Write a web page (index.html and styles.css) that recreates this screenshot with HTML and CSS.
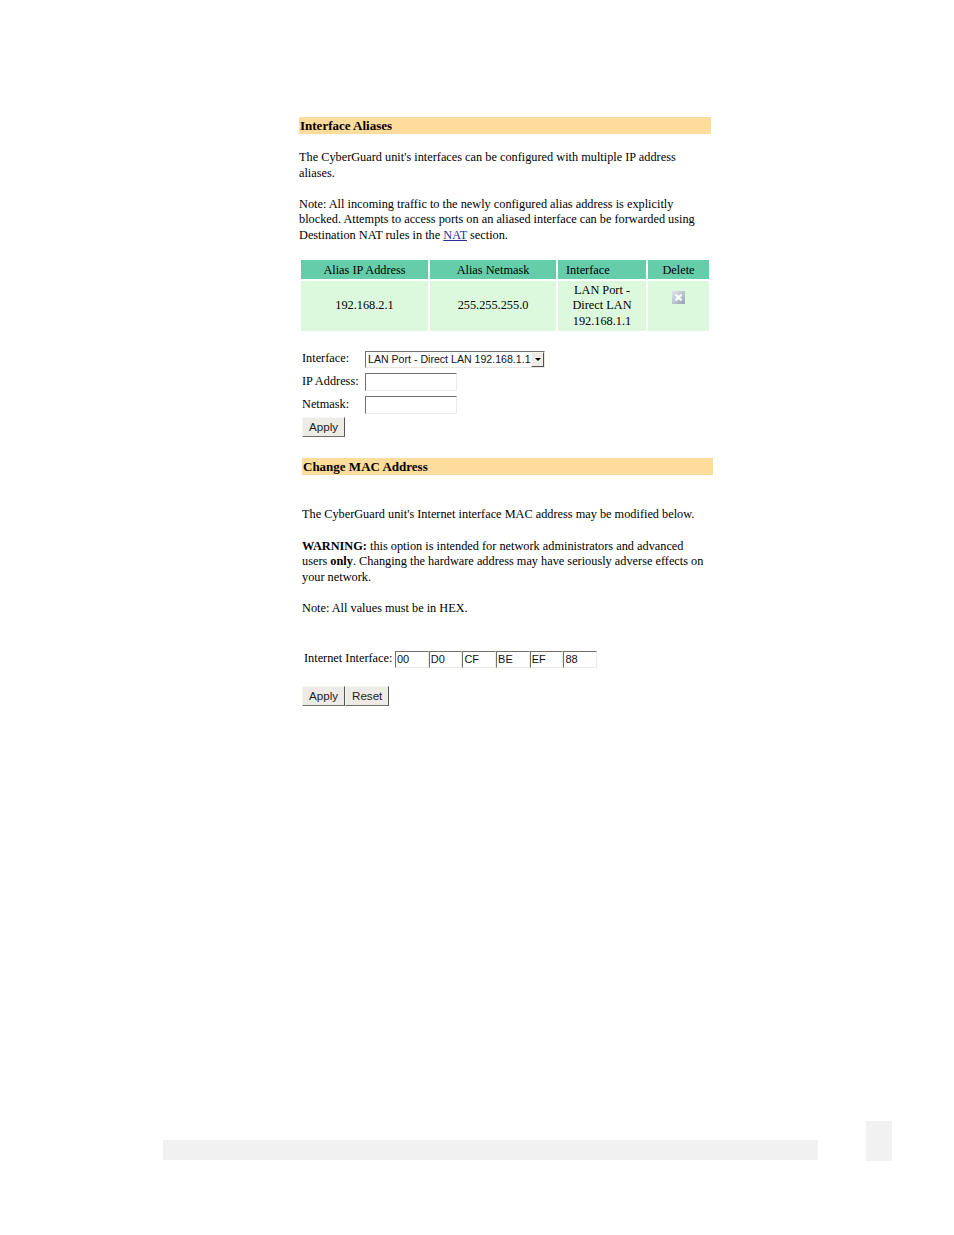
FILE: index.html
```html
<!DOCTYPE html>
<html lang="en">
<head>
  <meta charset="UTF-8">
  <title>Interface Aliases</title>
  <link rel="stylesheet" href="styles.css">
</head>
<body>
  <div class="page">
    <section class="aliases">
      <h3 class="banner">Interface Aliases</h3>
      <p>The CyberGuard unit's interfaces can be configured with multiple IP address<br>aliases.</p>
      <p>Note: All incoming traffic to the newly configured alias address is explicitly<br>blocked. Attempts to access ports on an aliased interface can be forwarded using<br>Destination NAT rules in the <a href="#">NAT</a> section.</p>

      <table class="alias-table">
        <colgroup>
          <col class="col-ip">
          <col class="col-mask">
          <col class="col-if">
          <col class="col-del">
        </colgroup>
        <tr>
          <th>Alias IP Address</th>
          <th>Alias Netmask</th>
          <th class="th-left">Interface</th>
          <th>Delete</th>
        </tr>
        <tr>
          <td>192.168.2.1</td>
          <td>255.255.255.0</td>
          <td>LAN Port -<br>Direct LAN<br>192.168.1.1</td>
          <td class="td-icon">
            <!-- delete icon -->
            <svg class="icon-delete" width="13" height="13" viewBox="0 0 13 13">
              <defs>
                <linearGradient id="delBg" x1="0" y1="0" x2="1" y2="1">
                  <stop offset="0" stop-color="#dfe6ec"/>
                  <stop offset="1" stop-color="#95a3b3"/>
                </linearGradient>
              </defs>
              <rect width="13" height="13" fill="url(#delBg)"/>
              <path d="M3.5 3.5 9.5 9.5M9.5 3.5 3.5 9.5" stroke="#fff" stroke-width="2.4"/>
            </svg>
          </td>
        </tr>
      </table>
    </section>

    <form class="alias-form">
      <label>Interface:</label>
      <div class="select-box">
        <select>
          <option>LAN Port - Direct LAN 192.168.1.1</option>
        </select>
        <span class="select-arrow"></span>
      </div>
      <label>IP Address:</label>
      <input type="text" class="text-input">
      <label>Netmask:</label>
      <input type="text" class="text-input">
      <div class="buttons"><button type="button">Apply</button></div>
    </form>

    <section class="mac">
      <h3 class="banner">Change MAC Address</h3>
      <p class="mac-intro">The CyberGuard unit's Internet interface MAC address may be modified below.</p>
      <p class="mac-warning"><b>WARNING:</b> this option is intended for network administrators and advanced<br>users <b>only</b>. Changing the hardware address may have seriously adverse effects on<br>your network.</p>
      <p>Note: All values must be in HEX.</p>

      <div class="mac-row">
        <label>Internet Interface:</label>
        <input type="text" class="hex-input" value="00">
        <input type="text" class="hex-input" value="D0">
        <input type="text" class="hex-input" value="CF">
        <input type="text" class="hex-input" value="BE">
        <input type="text" class="hex-input" value="EF">
        <input type="text" class="hex-input" value="88">
      </div>
      <div class="buttons"><button type="button">Apply</button><button type="button">Reset</button></div>
    </section>
  </div>

  <div class="footer-marks">
    <div class="mark-bar"></div>
    <div class="mark-square"></div>
  </div>
</body>
</html>
```

FILE: styles.css
```css
/* Reset */
* { margin: 0; padding: 0; box-sizing: border-box; }
body {
  width: 954px;
  height: 1235px;
  background: #fff;
  color: #000;
  font-family: "Liberation Serif", serif;
  font-size: 12.3px;
  line-height: 15.5px;
  overflow: hidden;
}
.page {
  height: 1121px;
  padding-top: 117px;
  padding-left: 299px;
}
p { margin-bottom: 15.5px; white-space: nowrap; }
a { color: #2c2c9c; }

/* Section headings */
.banner {
  height: 17px;
  line-height: 18px;
  padding-left: 1px;
  background: #fedc9c;
  font-size: 13px;
  font-weight: bold;
  color: #000;
}
.aliases { width: 412px; }
.aliases .banner { margin-bottom: 16px; }

/* Alias table */
.alias-table {
  width: 412px;
  margin-top: -1px;
  border-spacing: 2px;
  table-layout: fixed;
}
.col-ip { width: 127px; }
.col-mask { width: 126px; }
.col-if { width: 88px; }
.col-del { width: 61px; }
.alias-table th {
  height: 19px;
  padding-top: 3px;
  background: #66cdaa;
  font-weight: normal;
  text-align: center;
}
.alias-table th.th-left { text-align: left; padding-left: 8px; }
.alias-table td {
  height: 50px;
  padding-top: 1px;
  background: #ddf9dd;
  text-align: center;
}
.alias-table td.td-icon { vertical-align: top; padding-top: 10px; }
.icon-delete { display: block; margin: 0 auto; }

/* Form */
.alias-form {
  display: grid;
  grid-template-columns: 63px auto;
  justify-content: start;
  align-items: center;
  row-gap: 5px;
  margin: 18px 0 0 3px;
}
.alias-form .buttons { grid-column: 1 / 3; margin-top: -2px; }
.select-box {
  display: flex;
  width: 180px;
  height: 17px;
  border: 1px solid;
  border-color: #71706a #e8e7e0 #e8e7e0 #71706a;
  background: #fff;
}
.select-box select {
  flex: 1;
  min-width: 0;
  appearance: none;
  border: none;
  outline: none;
  background: #fff;
  padding-left: 2px;
  font-family: "Liberation Sans", sans-serif;
  font-size: 10.6px;
  color: #111;
}
.select-arrow {
  width: 13px;
  background: #ecebe5;
  border: 1px solid;
  border-color: #f8f8f4 #55544f #55544f #f8f8f4;
  position: relative;
}
.select-arrow::after {
  content: "";
  position: absolute;
  left: 3px;
  top: 5px;
  border: 3px solid transparent;
  border-top: 3px solid #000;
  border-bottom: none;
}
.text-input, .hex-input {
  border: 1px solid;
  border-color: #71706a #ebeae4 #ebeae4 #71706a;
  background: #fff;
  outline: none;
  font-family: "Liberation Sans", sans-serif;
  font-size: 11px;
  color: #111;
}
.text-input { width: 92px; height: 18px; }
.buttons { display: flex; }
.buttons button {
  height: 20px;
  padding: 0 6px;
  background: #ecebe5;
  border: 1px solid;
  border-color: #f6f6f2 #55544f #716f6a #f6f6f2;
  font-family: "Liberation Sans", sans-serif;
  font-size: 11.6px;
  color: #222;
}

/* MAC section */
.mac {
  width: 411px;
  margin: 21px 0 0 3px;
}
.mac .banner { margin-bottom: 32px; }
.mac .mac-intro { margin-bottom: 16.5px; }
.mac .mac-warning { margin-bottom: 15.5px; }
.mac-row {
  display: flex;
  align-items: center;
  height: 17px;
  margin: 34.5px 0 18px 2px;
}
.mac-row label { width: 91px; }
.hex-input {
  width: 33.7px;
  height: 17px;
  padding-left: 1px;
}

/* Grey marks at the bottom of the page */
.footer-marks {
  display: flex;
  align-items: flex-end;
  gap: 48px;
  padding-left: 163px;
}
.mark-bar { width: 655px; height: 20px; margin-bottom: 1px; background: #f1f1f1; }
.mark-square { width: 26px; height: 40px; background: #f1f1f1; }
```
